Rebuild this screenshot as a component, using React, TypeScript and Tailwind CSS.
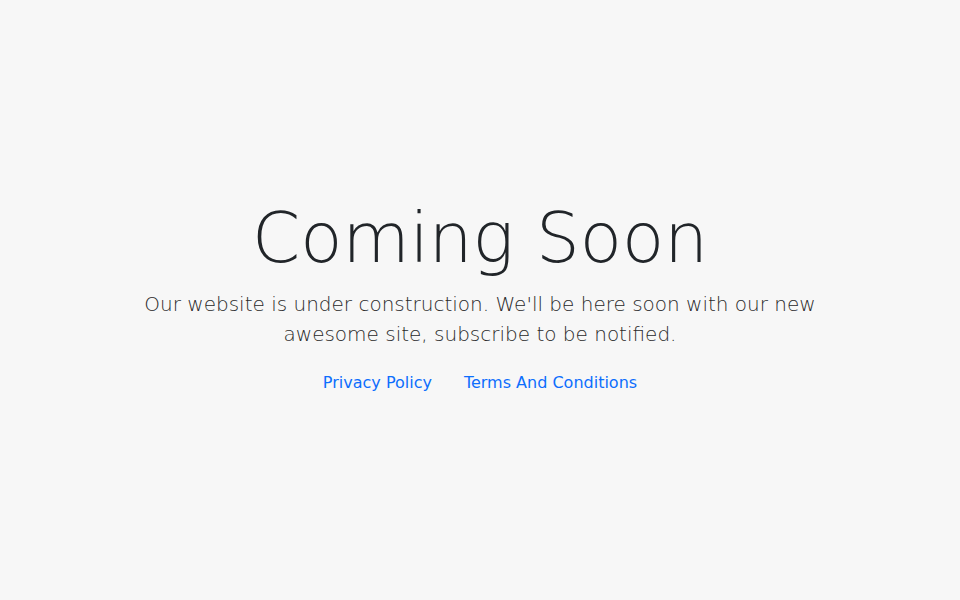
import React from "react";

export default function App() {
  return (
    <div className="min-h-screen w-full bg-[#f7f7f7] flex items-center justify-center" style={{ fontFamily: '"DejaVu Sans", sans-serif' }}>
      <div className="flex flex-col items-center text-center -mt-[8px]">
        <h1 className="text-[69px] leading-[1.2] font-extralight text-[#212529]">Coming Soon</h1>
        <p className="mt-[9px] w-[700px] text-[20px] leading-[30px] font-light text-[#2a2a2a]">
          Our website is under construction. We'll be here soon with our new awesome site, subscribe to be notified.
        </p>
        <div className="mt-[22px] flex gap-[32px] text-[16px] text-[#0d6efd]">
          <a href="#">Privacy Policy</a>
          <a href="#">Terms And Conditions</a>
        </div>
      </div>
    </div>
  );
}
